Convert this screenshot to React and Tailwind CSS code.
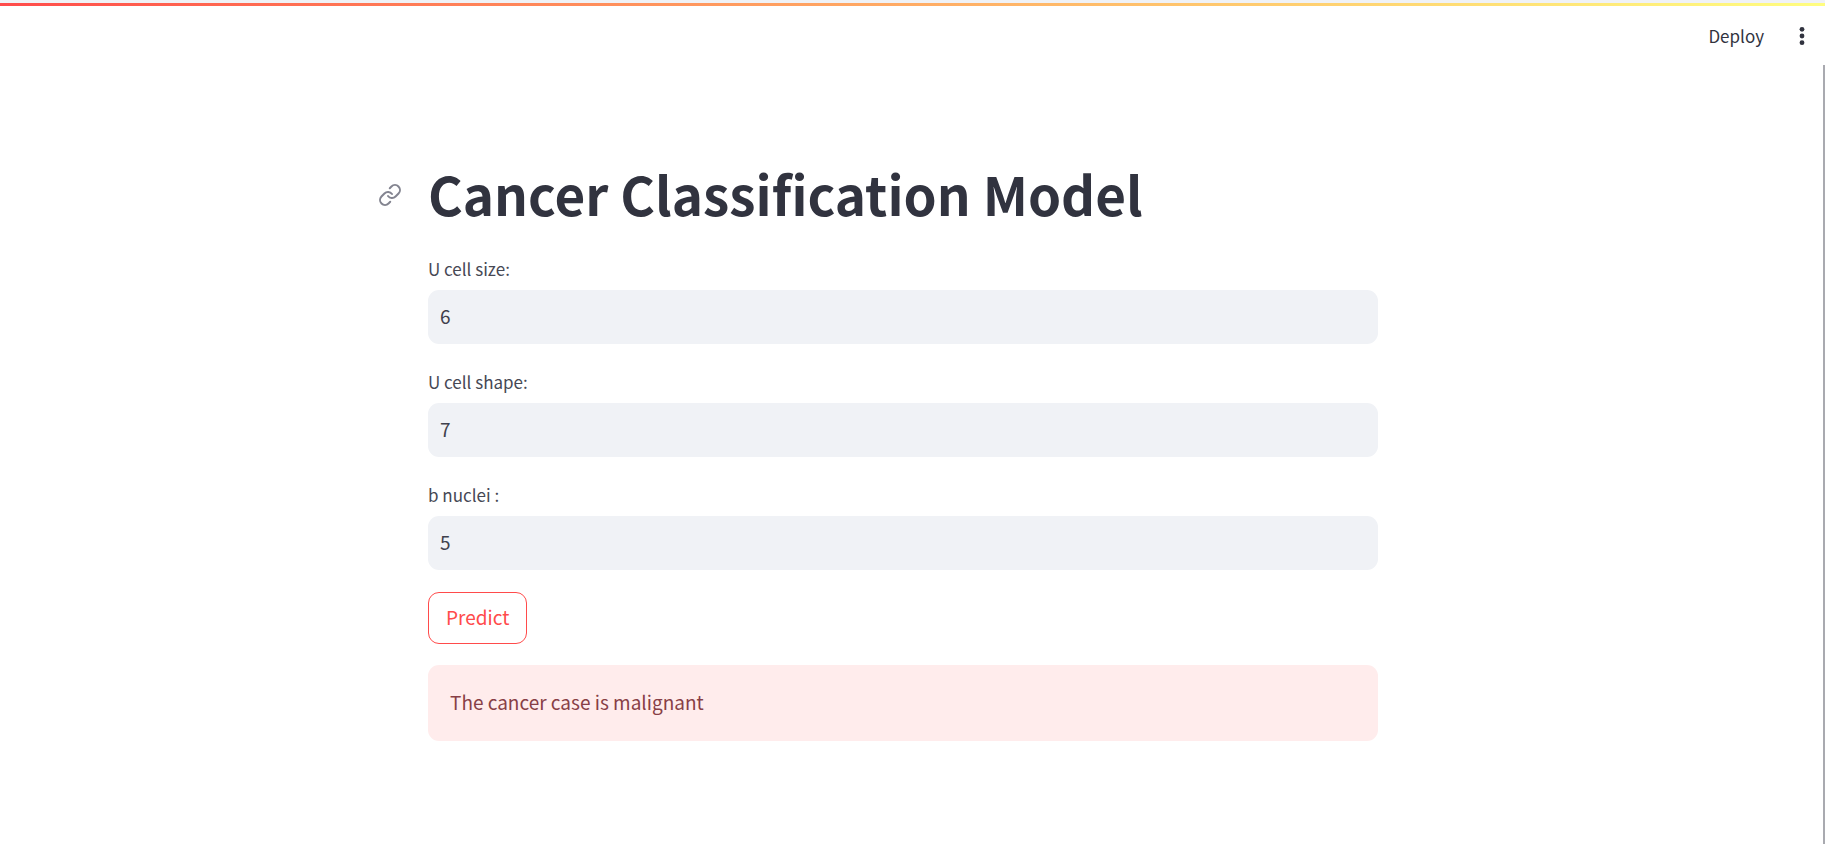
import { useState } from "react";
import { Link } from "lucide-react";

const FIELDS = [
  { id: "cell-size", label: "U cell size:", initial: "6" },
  { id: "cell-shape", label: "U cell shape:", initial: "7" },
  { id: "nuclei", label: "b nuclei :", initial: "5" },
];

function Header() {
  return (
    <header>
      <div className="h-[3px] bg-[#f0f2f6]" />
      <div className="h-[3px] bg-gradient-to-r from-[#ff4b4b] to-[#fffd80]" />
      <div className="flex h-[59px] items-center justify-end gap-8 pr-[17px]">
        <button type="button" className="text-[17px] leading-6">
          Deploy
        </button>
        <button type="button" aria-label="Main menu" className="flex h-6 w-3 items-center justify-center">
          <svg viewBox="0 0 6 20" className="h-5 w-1.5" fill="currentColor" aria-hidden="true">
            <circle cx="3" cy="3.3" r="2.4" />
            <circle cx="3" cy="10" r="2.4" />
            <circle cx="3" cy="16.7" r="2.4" />
          </svg>
        </button>
      </div>
    </header>
  );
}

function TextField({ id, label, initial }) {
  const [value, setValue] = useState(initial);
  return (
    <div className="flex flex-col gap-[5px]">
      <label htmlFor={id} className="text-[17px] leading-[32px] text-[#464854]">
        {label}
      </label>
      <input
        id={id}
        type="text"
        value={value}
        onChange={(e) => setValue(e.target.value)}
        className="h-[54px] w-full rounded-[11px] bg-[#f0f2f6] px-3 pb-[3px] text-[19px] text-[#3f414d] outline-none"
      />
    </div>
  );
}

export default function App() {
  return (
    <div className="relative min-h-screen bg-white font-['Noto_Sans_CJK_SC',sans-serif] text-[#31333f]">
      <Header />
      <main className="pt-[94px] pr-[19px] pb-[118px]">
        <div className="mx-auto flex max-w-[950px] flex-col">
          <div className="-ml-[50px] flex h-[72px] items-center gap-[26px]">
            <a href="#cancer-classification-model" aria-label="Link to heading" className="text-[#838490]">
              <Link size={24} strokeWidth={2} />
            </a>
            <h1 id="cancer-classification-model" className="pb-1 text-[53px] leading-[72px] font-bold">
              Cancer Classification Model
            </h1>
          </div>
          <form className="mt-[22px] flex flex-col gap-[22px]" onSubmit={(e) => e.preventDefault()}>
            {FIELDS.map((field) => (
              <TextField key={field.id} {...field} />
            ))}
            <button
              type="submit"
              className="h-[52px] self-start rounded-[11px] border border-[#ff4b4b] px-[17px] pb-[2px] text-[19px] text-[#ff4b4b]"
            >
              Predict
            </button>
          </form>
          <div role="alert" className="mt-[21px] rounded-[11px] bg-[#ffecec] px-[22px] pt-[21px] pb-[23px] text-[19px] leading-8 text-[#883f46]">
            The cancer case is malignant
          </div>
        </div>
      </main>
      <div className="absolute top-[65px] right-0 bottom-[15px] w-0.5 bg-[#a9aab0]" />
    </div>
  );
}
